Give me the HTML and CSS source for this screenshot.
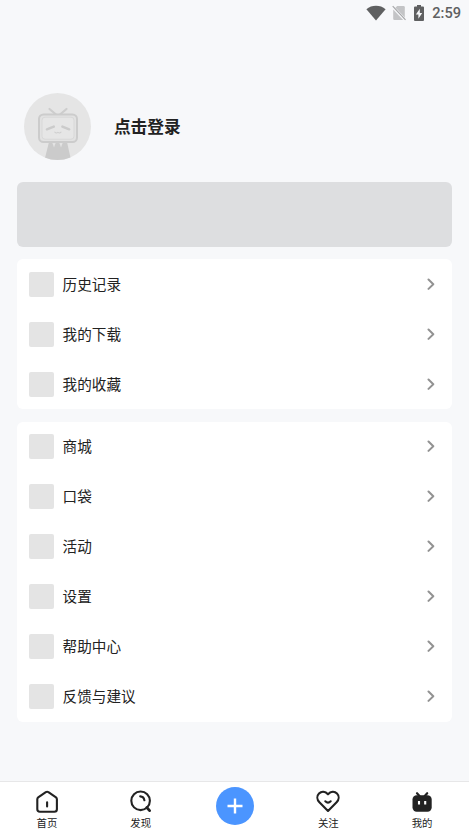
FILE: index.html
```html
<!DOCTYPE html>
<html lang="zh-CN">
<head>
<meta charset="utf-8">
<title>我的</title>
<link rel="stylesheet" href="styles.css">
</head>
<body>
<svg class="defs" width="0" height="0" aria-hidden="true">
  <symbol id="chevron" viewBox="0 0 8 12"><path d="M1.5 1.5 6.3 6.2 1.5 10.9" fill="none" stroke="#929292" stroke-width="2" stroke-linecap="round" stroke-linejoin="round"/></symbol>
</svg>
<div class="screen">
  <header class="status">
    <svg class="wifi" width="20" height="16" viewBox="0 0 20 16"><path d="M.4 4.2C5.6-.4 14.4-.4 19.6 4.2L10 15.4Z" fill="#5f6061"/></svg>
    <svg class="sim" width="14" height="16" viewBox="0 0 14 16"><path d="M5.2 1H11.5Q12.8 1 12.8 2.3V15H2.5Q1.2 15 1.2 13.7V5Z" fill="#c3c4c6"/><path d="M.3 1.5 13.5 15.3" stroke="#f7f8fa" stroke-width="3"/><path d="M.7 1.2 13.5 14.8" stroke="#a5a6a8" stroke-width="1.2"/></svg>
    <svg class="battery" width="10" height="16" viewBox="0 0 10 16"><path d="M3 0H7V1.6H9Q10 1.6 10 2.6V15Q10 16 9 16H1Q0 16 0 15V2.6Q0 1.6 1 1.6H3Z" fill="#5f6061"/><path d="M5.8 3.7 1.9 9.6H4.4V13.8L8.2 7.9H5.8Z" fill="#f7f8fa"/></svg>
    <span class="clock">2:59</span>
  </header>

  <main class="content">
    <section class="profile">
      <svg class="avatar" width="67" height="67" viewBox="0 0 67 67">
        <defs><clipPath id="round"><circle cx="33.5" cy="33.5" r="33.5"/></clipPath></defs>
        <circle cx="33.5" cy="33.5" r="33.5" fill="#e5e5e5"/>
        <path d="M25.5 16 32 21.5M42.5 16 36 21.5" fill="none" stroke="#cdcdcd" stroke-width="2.2" stroke-linecap="round"/>
        <path clip-path="url(#round)" d="M25 49H43L47 67H20.5Z" fill="#cbcbcb"/>
        <path d="M28 49 30 54.5 32 49ZM35 49 37 54.5 39 49Z" fill="#e3e3e3"/>
        <rect x="15" y="21.5" width="38" height="27.5" rx="4.5" fill="#e2e2e2" stroke="#cccccc" stroke-width="2"/>
        <rect x="18" y="24.2" width="32" height="22" rx="3" fill="#e6e6e6" stroke="#d8d8d8" stroke-width="1"/>
        <path d="M22.9 36.3 29.8 33.6M38.4 33.6 45.2 36.3" fill="none" stroke="#cbcbcb" stroke-width="2.5" stroke-linecap="round"/>
        <path d="M30.8 39.2Q32.3 40.6 33.9 39.4Q35.5 40.6 37 39.2" fill="none" stroke="#cfcfcf" stroke-width="1.1" stroke-linecap="round"/>
      </svg>
      <h1 class="login">点击登录</h1>
    </section>

    <div class="banner"></div>

    <ul class="card">
      <li class="row"><span class="thumb"></span><span class="label">历史记录</span><svg class="arrow"><use href="#chevron"/></svg></li>
      <li class="row"><span class="thumb"></span><span class="label">我的下载</span><svg class="arrow"><use href="#chevron"/></svg></li>
      <li class="row"><span class="thumb"></span><span class="label">我的收藏</span><svg class="arrow"><use href="#chevron"/></svg></li>
    </ul>

    <ul class="card">
      <li class="row"><span class="thumb"></span><span class="label">商城</span><svg class="arrow"><use href="#chevron"/></svg></li>
      <li class="row"><span class="thumb"></span><span class="label">口袋</span><svg class="arrow"><use href="#chevron"/></svg></li>
      <li class="row"><span class="thumb"></span><span class="label">活动</span><svg class="arrow"><use href="#chevron"/></svg></li>
      <li class="row"><span class="thumb"></span><span class="label">设置</span><svg class="arrow"><use href="#chevron"/></svg></li>
      <li class="row"><span class="thumb"></span><span class="label">帮助中心</span><svg class="arrow"><use href="#chevron"/></svg></li>
      <li class="row"><span class="thumb"></span><span class="label">反馈与建议</span><svg class="arrow"><use href="#chevron"/></svg></li>
    </ul>
  </main>

  <nav class="tabs">
    <a class="tab">
      <svg class="tab-icon" viewBox="0 0 24 24"><path d="M2.3 9.2Q2.3 8.1 3.2 7.4L10.8 2.2Q12.1 1.4 13.4 2.2L21 7.4Q21.9 8.1 21.9 9.2V19.2Q21.9 21.7 19.4 21.7H4.8Q2.3 21.7 2.3 19.2ZM12.1 12.2V16.4" fill="none" stroke="#222" stroke-width="2.1" stroke-linejoin="round" stroke-linecap="round"/></svg>
      <span>首页</span>
    </a>
    <a class="tab">
      <svg class="tab-icon" viewBox="0 0 24 24"><g fill="none" stroke="#222" stroke-width="2.1" stroke-linecap="round"><circle cx="11.6" cy="10.8" r="9.3"/><path d="M11.2 6.4Q14.8 6.6 15.4 10.3"/><path d="M17.8 17.5 20.6 20.6" stroke-width="2.8"/></g></svg>
      <span>发现</span>
    </a>
    <a class="tab tab-add">
      <svg width="38" height="38" viewBox="0 0 38 38"><circle cx="19" cy="19" r="19" fill="#4b95ff"/><path d="M19 11.5V26.5M11.5 19H26.5" stroke="#fff" stroke-width="2.4"/></svg>
    </a>
    <a class="tab">
      <svg class="tab-icon" viewBox="0 0 24 24"><path d="M12 20.9 3.4 12.2C.7 9.4.8 5.7 3 3.5C5.6 1 9.3 1.5 12 4.3C14.7 1.5 18.4 1 21 3.5C23.2 5.7 23.3 9.4 20.6 12.2ZM9.3 11.3Q12 13.8 14.7 11.3" fill="none" stroke="#222" stroke-width="2.1" stroke-linejoin="round" stroke-linecap="round"/></svg>
      <span>关注</span>
    </a>
    <a class="tab">
      <svg class="tab-icon" viewBox="0 0 24 24"><path d="M7 3.2 9.5 6M17.2 3.2 14.7 6" stroke="#222" stroke-width="2.2" stroke-linecap="round"/><rect x="2.5" y="5.2" width="19.2" height="16.6" rx="4.2" fill="#222"/><path d="M9 11.1V14.5M15.2 11.1V14.5" stroke="#fff" stroke-width="2.1"/></svg>
      <span>我的</span>
    </a>
  </nav>
</div>
</body>
</html>
```

FILE: styles.css
```css
* {
  box-sizing: border-box;
}

body {
  margin: 0;
  background: #f7f8fa;
  color: #222;
  font-family: "Noto Sans CJK SC", "Noto Sans", sans-serif;
}

svg {
  display: block;
  flex: none;
}

.defs {
  position: absolute;
}

.screen {
  display: flex;
  flex-direction: column;
  height: 833px;
}

.status {
  display: flex;
  justify-content: flex-end;
  align-items: center;
  height: 25px;
  padding-right: 8px;
}

.sim {
  margin-left: 6px;
}

.battery {
  margin: 0 8px 0 8px;
}

.clock {
  padding-top: 2px;
  color: #5f6061;
  font: 500 14.6px/25px Roboto, sans-serif;
}

.content {
  display: flex;
  flex: 1;
  flex-direction: column;
  padding: 68px 17px 0;
}

.profile {
  display: flex;
  align-items: center;
  gap: 22.5px;
  height: 67px;
  margin-left: 7.4px;
}

.login {
  margin: 0;
  padding-bottom: 1px;
  font-size: 16.7px;
  font-weight: 600;
  line-height: 24px;
}

.banner {
  height: 65px;
  margin-top: 22px;
  border-radius: 6px;
  background: #dddee0;
}

.card {
  margin: 12px 0 0;
  padding: 0;
  border-radius: 6px;
  background: #fff;
  list-style: none;
}

.card + .card {
  margin-top: 12.7px;
}

.row {
  display: flex;
  align-items: center;
  height: 50px;
  padding: 0 17px 0 12px;
}

.thumb {
  width: 25px;
  height: 25px;
  margin-right: 8.6px;
  border-radius: 2px;
  background: #e4e4e4;
}

.label {
  flex: 1;
  padding-bottom: 0.8px;
  font-size: 14.6px;
  line-height: 22px;
}

.arrow {
  width: 8px;
  height: 12px;
}

.card + .card .arrow {
  margin-bottom: 1px;
}

.tabs {
  display: flex;
  height: 52px;
  border-top: 1px solid #e7e7e8;
  background: #fff;
}

.tab {
  display: flex;
  flex: 1;
  flex-direction: column;
  align-items: center;
  padding-top: 8px;
  font-size: 10.4px;
  line-height: 16px;
}

.tab-icon {
  width: 24px;
  height: 24px;
  margin-bottom: 1px;
}

.tab-add {
  padding-top: 5px;
}

.tab-add svg {
  margin-left: 1px;
}
```
